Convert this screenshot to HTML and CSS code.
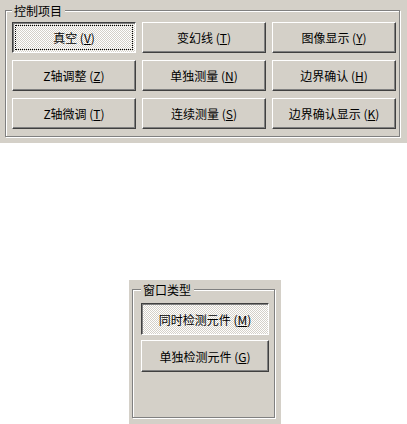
FILE: index.html
```html
<!DOCTYPE html>
<html lang="zh-CN">
<head>
<meta charset="utf-8">
<title>控制项目</title>
<link rel="stylesheet" href="styles.css">
</head>
<body>
<div class="top-panel">
  <fieldset class="group group-main">
    <legend class="group-title">控制项目</legend>
    <div class="btn-grid">
      <button class="btn checked focused">真空 (<u>V</u>)</button>
      <button class="btn">变幻线 (<u>T</u>)</button>
      <button class="btn">图像显示 (<u>Y</u>)</button>
      <button class="btn">Z轴调整 (<u>Z</u>)</button>
      <button class="btn">单独测量 (<u>N</u>)</button>
      <button class="btn">边界确认 (<u>H</u>)</button>
      <button class="btn">Z轴微调 (<u>T</u>)</button>
      <button class="btn">连续测量 (<u>S</u>)</button>
      <button class="btn">边界确认显示 (<u>K</u>)</button>
    </div>
  </fieldset>
</div>
<div class="side-panel">
  <fieldset class="group group-window">
    <legend class="group-title">窗口类型</legend>
    <div class="btn-col">
      <button class="btn tall checked">同时检测元件 (<u>M</u>)</button>
      <button class="btn tall">单独检测元件 (<u>G</u>)</button>
    </div>
  </fieldset>
</div>
</body>
</html>
```
FILE: styles.css
```css
html, body {
  margin: 0;
  padding: 0;
  background: #ffffff;
}

body {
  width: 407px;
  height: 424px;
  overflow: hidden;
  font-family: "Noto Sans CJK SC", "Liberation Sans", sans-serif;
  font-size: 12px;
  color: #000;
}

.top-panel {
  box-sizing: border-box;
  width: 407px;
  height: 143px;
  padding-top: 2px;
  background: #d4d0c8;
}

.group {
  box-sizing: border-box;
  min-width: 0;
  margin: 0;
  border: 1px solid #808080;
  box-shadow: 1px 1px 0 #ffffff, inset 1px 1px 0 #ffffff;
}

.group-title {
  padding: 0 3px 0 2px;
  margin: 0;
  line-height: 17px;
  height: 17px;
  background: #d4d0c8;
  font-size: 12px;
}

.group-main {
  width: 395px;
  margin-left: 5px;
  padding: 3px 6px 7px 6px;
}

.btn-grid {
  display: grid;
  grid-template-columns: repeat(3, 124px);
  grid-template-rows: repeat(3, 31px);
  column-gap: 6px;
  row-gap: 7px;
}

.btn {
  -webkit-appearance: none;
  appearance: none;
  box-sizing: border-box;
  margin: 0;
  padding: 0;
  display: flex;
  align-items: center;
  justify-content: center;
  font-family: "Noto Sans CJK SC", "Liberation Sans", sans-serif;
  font-size: 12px;
  color: #000;
  white-space: nowrap;
  background: #d4d0c8;
  border: 1px solid;
  border-color: #ffffff #404040 #404040 #ffffff;
  box-shadow: inset -1px -1px 0 #808080;
  border-radius: 0;
}

.btn u {
  text-decoration: underline;
  text-underline-offset: 1px;
}

.btn.checked {
  border-color: #404040 #ffffff #ffffff #404040;
  box-shadow: inset 1px 1px 0 #808080;
  background-color: #ffffff;
  background-image: conic-gradient(#ffffff 25%, #d4d0c8 0 50%, #ffffff 0 75%, #d4d0c8 0);
  background-size: 2px 2px;
}

.btn.focused {
  outline: 1px dotted #000;
  outline-offset: -4px;
}

.side-panel {
  box-sizing: border-box;
  width: 152px;
  height: 144px;
  margin: 137px 0 0 129px;
  padding-top: 1px;
  background: #d4d0c8;
}

.group-window {
  width: 143px;
  height: 137px;
  margin-left: 3px;
  padding: 5px 6px 0 8px;
}

.btn-col {
  display: flex;
  flex-direction: column;
  gap: 5px;
}

.btn.tall {
  width: 128px;
  height: 32px;
}
```
